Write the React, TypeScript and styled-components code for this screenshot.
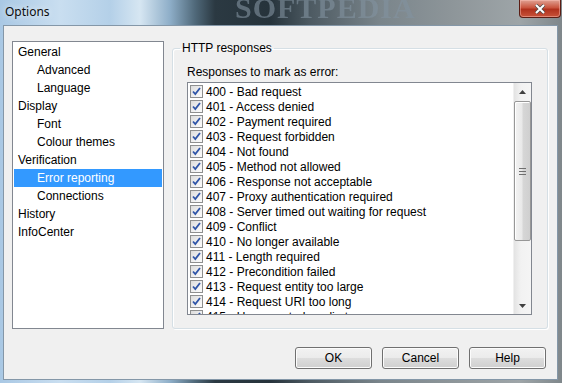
import React from 'react';
import styled, { createGlobalStyle } from 'styled-components';

const GlobalStyle = createGlobalStyle`
  html, body {
    margin: 0;
    padding: 0;
    background: #1f2a30;
  }
  body {
    font-family: "Liberation Sans", Arial, sans-serif;
    font-size: 12px;
    color: #000;
  }
`;

const Window = styled.div`
  width: 562px;
  height: 383px;
  box-sizing: border-box;
  display: flex;
  flex-direction: column;
  padding: 0 4px 3px 3px;
  background: linear-gradient(
    90deg,
    #a9c8e4 0px,
    #c9def0 60px,
    #b4d0e8 110px,
    #d6e6f2 140px,
    #8eaec8 170px,
    #50697a 195px,
    #2b3942 215px,
    #26333b 270px,
    #4d5a62 310px,
    #7a858b 380px,
    #8d9599 450px,
    #9ea5a8 520px,
    #7f878b 562px
  );
  position: relative;
  overflow: hidden;
`;

const TitleBar = styled.div`
  height: 25px;
  display: flex;
  align-items: center;
  justify-content: space-between;
  position: relative;
`;

const Caption = styled.span`
  font-family: "Noto Sans", "Liberation Sans", sans-serif;
  font-size: 12px;
  color: #0b0b0b;
  padding-left: 2px;
  margin-top: -3px;
  text-shadow: 0 0 6px rgba(255, 255, 255, 0.9);
`;

const Watermark = styled.span`
  position: absolute;
  left: 232px;
  top: -9px;
  font-family: "Liberation Serif", serif;
  font-weight: bold;
  font-size: 30px;
  letter-spacing: 1px;
  color: rgba(130, 146, 160, 0.6);
  filter: blur(0.7px);
`;

const CloseButton = styled.div`
  align-self: flex-start;
  width: 42px;
  height: 18px;
  margin-right: -3px;
  box-sizing: border-box;
  border: 1px solid #5b1d14;
  border-top: none;
  border-radius: 0 0 4px 4px;
  background: linear-gradient(180deg, #e0a294 0%, #c9553f 45%, #b0311d 55%, #c8533a 100%);
  box-shadow: inset 0 0 0 1px rgba(255, 200, 190, 0.45);
  display: flex;
  align-items: center;
  justify-content: center;
`;

const Client = styled.div`
  flex: 1;
  background: #f0f0f0;
  border: 1px solid #8497a8;
  display: flex;
  flex-direction: column;
  padding: 15px 11px 10px 8px;
`;

const Body = styled.div`
  display: flex;
  gap: 8px;
  height: 288px;
`;

const Tree = styled.div`
  width: 152px;
  box-sizing: border-box;
  background: #fff;
  border: 1px solid #828790;
  padding: 1px 1px 0 1px;
  display: flex;
  flex-direction: column;
`;

const TreeItem = styled.div<{ $child?: boolean; $selected?: boolean }>`
  height: 18px;
  line-height: 18px;
  padding-left: ${(p) => (p.$child ? 23 : 4)}px;
  background: ${(p) => (p.$selected ? '#3399ff' : 'transparent')};
  color: ${(p) => (p.$selected ? '#fff' : '#000')};
  white-space: nowrap;
`;

const Group = styled.fieldset`
  flex: 1;
  margin: 0;
  margin-right: -2px;
  padding: 10px 15px 13px 14px;
  border: 1px solid #d5dfe5;
  border-radius: 3px;
  box-shadow: inset 1px 1px 0 #fff, 1px 1px 0 #fff;
  display: flex;
  flex-direction: column;
  min-width: 0;
`;

const Legend = styled.legend`
  padding: 0 2px;
  margin-left: -7px;
  line-height: 14px;
`;

const ListLabel = styled.div`
  line-height: 14px;
  margin-bottom: 3px;
`;

const ListBox = styled.div`
  flex: 1;
  border: 1px solid #828790;
  background: #fff;
  display: flex;
  overflow: hidden;
`;

const Rows = styled.div`
  flex: 1;
  padding-top: 1px;
  overflow: hidden;
`;

const Row = styled.div`
  height: 15px;
  display: flex;
  align-items: center;
  padding-left: 2px;
  gap: 3px;
  white-space: nowrap;
`;

const Box = styled.span`
  width: 13px;
  height: 13px;
  box-sizing: border-box;
  border: 1px solid #8e8f8f;
  background: linear-gradient(135deg, #dcdcdc 0%, #f4f4f4 70%, #fbfbfb 100%);
  display: flex;
  align-items: center;
  justify-content: center;
  flex-shrink: 0;
`;

const ScrollBar = styled.div`
  width: 17px;
  background: linear-gradient(90deg, #e3e3e3 0%, #f2f2f2 40%, #f5f5f5 100%);
  display: flex;
  flex-direction: column;
  border-left: 1px solid #f0f0f0;
`;

const Arrow = styled.div`
  height: 17px;
  display: flex;
  align-items: center;
  justify-content: center;
`;

const Thumb = styled.div`
  height: 140px;
  margin: 1px 0 0 0;
  box-sizing: border-box;
  border: 1px solid #979797;
  border-radius: 2px;
  background: linear-gradient(90deg, #f3f3f3 0%, #e9e9e9 45%, #d6d6d6 55%, #cfcfcf 100%);
  box-shadow: inset 1px 1px 0 #fff;
  display: flex;
  align-items: center;
  justify-content: center;
`;

const Track = styled.div`
  flex: 1;
`;

const ButtonRow = styled.div`
  display: flex;
  justify-content: flex-end;
  gap: 10px;
  margin-top: auto;
`;

const Button = styled.button`
  width: 77px;
  height: 22px;
  border: 1px solid #707070;
  border-radius: 3px;
  background: linear-gradient(180deg, #f2f2f2 0%, #ebebeb 49%, #dddddd 50%, #cfcfcf 100%);
  box-shadow: inset 0 0 0 1px #fcfcfc;
  font-family: "Liberation Sans", Arial, sans-serif;
  font-size: 12px;
  color: #000;
  padding: 0;
`;

const treeItems = [
  { label: 'General' },
  { label: 'Advanced', child: true },
  { label: 'Language', child: true },
  { label: 'Display' },
  { label: 'Font', child: true },
  { label: 'Colour themes', child: true },
  { label: 'Verification' },
  { label: 'Error reporting', child: true, selected: true },
  { label: 'Connections', child: true },
  { label: 'History' },
  { label: 'InfoCenter' },
];

const responses = [
  '400 - Bad request',
  '401 - Access denied',
  '402 - Payment required',
  '403 - Request forbidden',
  '404 - Not found',
  '405 - Method not allowed',
  '406 - Response not acceptable',
  '407 - Proxy authentication required',
  '408 - Server timed out waiting for request',
  '409 - Conflict',
  '410 - No longer available',
  '411 - Length required',
  '412 - Precondition failed',
  '413 - Request entity too large',
  '414 - Request URI too long',
  '415 - Unsupported media type',
];

const Check = () => (
  <Box>
    <svg width="9" height="9" viewBox="0 0 9 9">
      <path d="M1 4.5 L3.3 7 L8 1" fill="none" stroke="#2f55a8" strokeWidth="1.8" />
    </svg>
  </Box>
);

const App = () => {
  return (
    <>
      <GlobalStyle />
      <Window>
        <TitleBar>
          <Caption>Options</Caption>
          <Watermark>SOFTPEDIA</Watermark>
          <CloseButton>
            <svg width="12" height="10" viewBox="0 0 12 10">
              <path d="M2 1 L10 9 M10 1 L2 9" stroke="#4a4a4a" strokeWidth="3.4" />
              <path d="M2 1 L10 9 M10 1 L2 9" stroke="#fff" strokeWidth="2" />
            </svg>
          </CloseButton>
        </TitleBar>
        <Client>
          <Body>
            <Tree>
              {treeItems.map((t) => (
                <TreeItem key={t.label} $child={t.child} $selected={t.selected}>
                  {t.label}
                </TreeItem>
              ))}
            </Tree>
            <Group>
              <Legend>HTTP responses</Legend>
              <ListLabel>Responses to mark as error:</ListLabel>
              <ListBox>
                <Rows>
                  {responses.map((r) => (
                    <Row key={r}>
                      <Check />
                      <span>{r}</span>
                    </Row>
                  ))}
                </Rows>
                <ScrollBar>
                  <Arrow>
                    <svg width="7" height="4" viewBox="0 0 7 4">
                      <path d="M0 4 L3.5 0 L7 4 Z" fill="#404040" />
                    </svg>
                  </Arrow>
                  <Thumb>
                    <svg width="7" height="7" viewBox="0 0 7 7">
                      <path d="M0 0.5 H7 M0 3.5 H7 M0 6.5 H7" stroke="#6f6f6f" strokeWidth="1" />
                    </svg>
                  </Thumb>
                  <Track />
                  <Arrow>
                    <svg width="7" height="4" viewBox="0 0 7 4">
                      <path d="M0 0 L7 0 L3.5 4 Z" fill="#404040" />
                    </svg>
                  </Arrow>
                </ScrollBar>
              </ListBox>
            </Group>
          </Body>
          <ButtonRow>
            <Button>OK</Button>
            <Button>Cancel</Button>
            <Button>Help</Button>
          </ButtonRow>
        </Client>
      </Window>
    </>
  );
};

export default App;
